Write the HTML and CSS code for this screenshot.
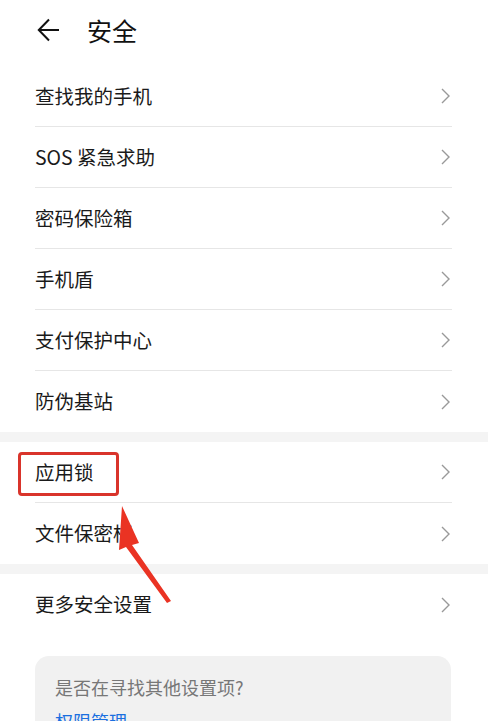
FILE: index.html
```html
<!DOCTYPE html>
<html lang="zh-CN">
<head>
<meta charset="utf-8">
<link rel="stylesheet" href="styles.css">
</head>
<body>
<div class="page">
  <header class="header">
    <svg class="back" width="24" height="24" viewBox="0 0 24 24"><path d="M22 12H2M12 1.5L1.8 12L12 22.5" fill="none" stroke="#111" stroke-width="2"/></svg>
    <h1 class="title">安全</h1>
  </header>

  <section class="group">
    <div class="row"><span class="label">查找我的手机</span><svg class="chev" width="9" height="16" viewBox="0 0 9 16"><path d="M1 1l7 7-7 7" fill="none" stroke="#999" stroke-width="1.4"/></svg></div>
    <div class="row"><span class="label">SOS 紧急求助</span><svg class="chev" width="9" height="16" viewBox="0 0 9 16"><path d="M1 1l7 7-7 7" fill="none" stroke="#999" stroke-width="1.4"/></svg></div>
    <div class="row"><span class="label">密码保险箱</span><svg class="chev" width="9" height="16" viewBox="0 0 9 16"><path d="M1 1l7 7-7 7" fill="none" stroke="#999" stroke-width="1.4"/></svg></div>
    <div class="row"><span class="label">手机盾</span><svg class="chev" width="9" height="16" viewBox="0 0 9 16"><path d="M1 1l7 7-7 7" fill="none" stroke="#999" stroke-width="1.4"/></svg></div>
    <div class="row"><span class="label">支付保护中心</span><svg class="chev" width="9" height="16" viewBox="0 0 9 16"><path d="M1 1l7 7-7 7" fill="none" stroke="#999" stroke-width="1.4"/></svg></div>
    <div class="row last"><span class="label">防伪基站</span><svg class="chev" width="9" height="16" viewBox="0 0 9 16"><path d="M1 1l7 7-7 7" fill="none" stroke="#999" stroke-width="1.4"/></svg></div>
  </section>

  <div class="band"></div>

  <section class="group second">
    <div class="row"><span class="label">应用锁</span><svg class="chev" width="9" height="16" viewBox="0 0 9 16"><path d="M1 1l7 7-7 7" fill="none" stroke="#999" stroke-width="1.4"/></svg></div>
    <div class="row last"><span class="label">文件保密柜</span><svg class="chev" width="9" height="16" viewBox="0 0 9 16"><path d="M1 1l7 7-7 7" fill="none" stroke="#999" stroke-width="1.4"/></svg></div>
    <div class="highlight"></div>
    <svg class="arrow" width="70" height="100" viewBox="0 0 70 100"><path d="M12 0L29 37L22 39L61 95L57 97L16 41L9 44Z" fill="#ea3323"/></svg>
  </section>

  <div class="band"></div>

  <section class="group">
    <div class="row last"><span class="label">更多安全设置</span><svg class="chev" width="9" height="16" viewBox="0 0 9 16"><path d="M1 1l7 7-7 7" fill="none" stroke="#999" stroke-width="1.4"/></svg></div>
  </section>

  <div class="card">
    <p class="card-q">是否在寻找其他设置项?</p>
    <p class="card-link">权限管理</p>
  </div>
</div>
</body>
</html>
```

FILE: styles.css
```css
html, body {
  margin: 0;
  padding: 0;
  background: #fff;
}
body {
  font-family: "Noto Sans CJK SC", "Noto Sans", sans-serif;
  color: #191919;
  overflow: hidden;
}
.page {
  width: 488px;
  height: 721px;
  overflow: hidden;
}
.header {
  height: 66px;
  display: flex;
  align-items: center;
  padding-left: 37px;
  box-sizing: border-box;
  padding-bottom: 6px;
}
.back {
  display: block;
}
.title {
  margin: 0 0 0 26px;
  font-size: 25px;
  font-weight: 400;
  line-height: 1;
  color: #111;
}
.group {
  padding: 0 36px 0 35px;
}
.second {
  position: relative;
}
.row {
  height: 61px;
  display: flex;
  align-items: center;
  justify-content: space-between;
  border-bottom: 1px solid #e6e6e6;
  box-sizing: border-box;
}
.row.last {
  border-bottom: none;
}
.label {
  font-size: 19.5px;
  color: #1a1a1a;
  position: relative;
  top: -1px;
}
.chev {
  display: block;
  margin-right: 2px;
}
.band {
  height: 10px;
  background: #f4f4f4;
}
.highlight {
  position: absolute;
  left: 18px;
  top: 10px;
  width: 101px;
  height: 44px;
  border: 3px solid #d9342b;
  border-radius: 4px;
  box-sizing: border-box;
}
.arrow {
  position: absolute;
  left: 110px;
  top: 64px;
}
.card {
  margin: 21px 37px 0 35px;
  background: #f1f1f1;
  border-radius: 14px;
  padding: 18px 20px 10px;
}
.card-q {
  margin: 0;
  font-size: 18px;
  color: #777;
  line-height: 26px;
}
.card-link {
  margin: 8px 0 0;
  font-size: 18px;
  color: #1a6fe0;
  line-height: 26px;
}
```
